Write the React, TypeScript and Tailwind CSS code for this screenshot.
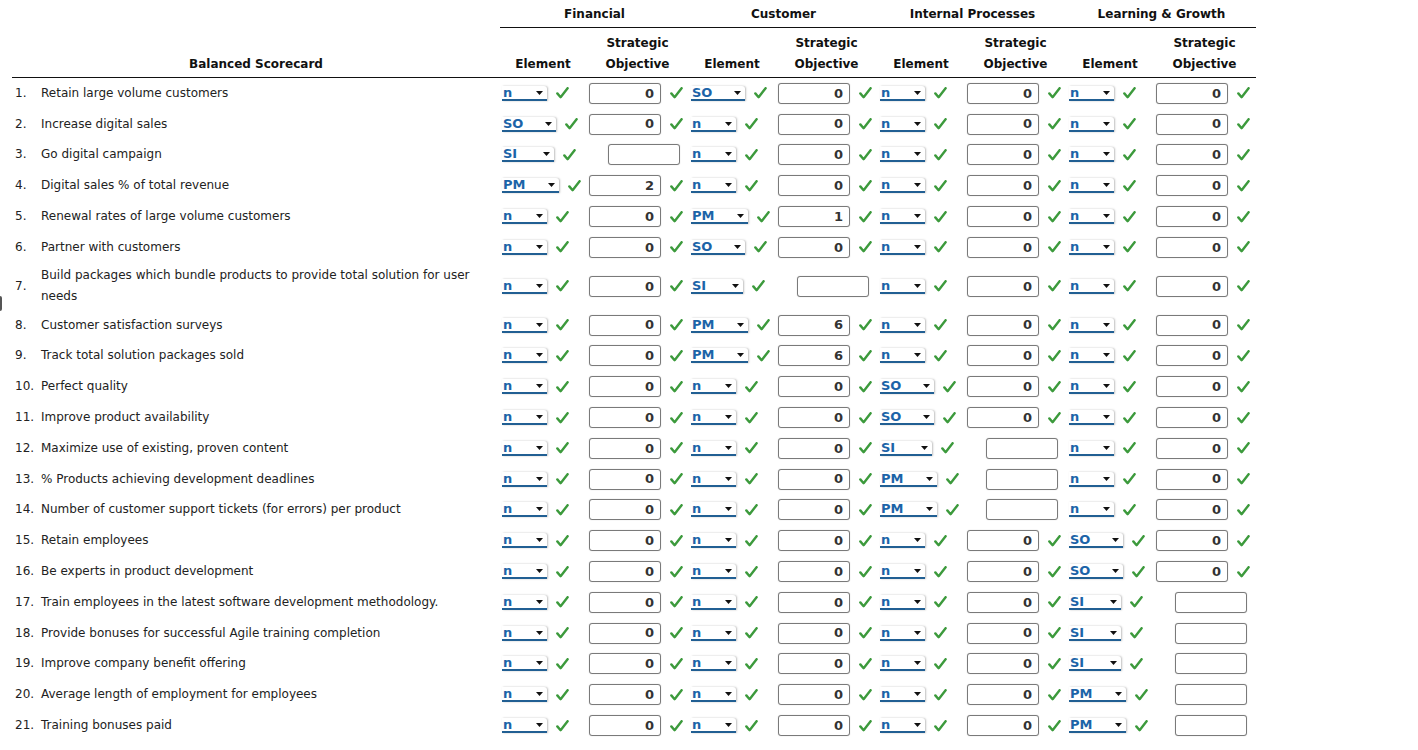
import React from "react";

type Cell = [string, string];
type Row = { label: string; cells: Cell[] };

const rows: Row[] = [
  { label: "Retain large volume customers", cells: [["n", "0"], ["SO", "0"], ["n", "0"], ["n", "0"]] },
  { label: "Increase digital sales", cells: [["SO", "0"], ["n", "0"], ["n", "0"], ["n", "0"]] },
  { label: "Go digital campaign", cells: [["SI", ""], ["n", "0"], ["n", "0"], ["n", "0"]] },
  { label: "Digital sales % of total revenue", cells: [["PM", "2"], ["n", "0"], ["n", "0"], ["n", "0"]] },
  { label: "Renewal rates of large volume customers", cells: [["n", "0"], ["PM", "1"], ["n", "0"], ["n", "0"]] },
  { label: "Partner with customers", cells: [["n", "0"], ["SO", "0"], ["n", "0"], ["n", "0"]] },
  { label: "Build packages which bundle products to provide total solution for user needs", cells: [["n", "0"], ["SI", ""], ["n", "0"], ["n", "0"]] },
  { label: "Customer satisfaction surveys", cells: [["n", "0"], ["PM", "6"], ["n", "0"], ["n", "0"]] },
  { label: "Track total solution packages sold", cells: [["n", "0"], ["PM", "6"], ["n", "0"], ["n", "0"]] },
  { label: "Perfect quality", cells: [["n", "0"], ["n", "0"], ["SO", "0"], ["n", "0"]] },
  { label: "Improve product availability", cells: [["n", "0"], ["n", "0"], ["SO", "0"], ["n", "0"]] },
  { label: "Maximize use of existing, proven content", cells: [["n", "0"], ["n", "0"], ["SI", ""], ["n", "0"]] },
  { label: "% Products achieving development deadlines", cells: [["n", "0"], ["n", "0"], ["PM", ""], ["n", "0"]] },
  { label: "Number of customer support tickets (for errors) per product", cells: [["n", "0"], ["n", "0"], ["PM", ""], ["n", "0"]] },
  { label: "Retain employees", cells: [["n", "0"], ["n", "0"], ["n", "0"], ["SO", "0"]] },
  { label: "Be experts in product development", cells: [["n", "0"], ["n", "0"], ["n", "0"], ["SO", "0"]] },
  { label: "Train employees in the latest software development methodology.", cells: [["n", "0"], ["n", "0"], ["n", "0"], ["SI", ""]] },
  { label: "Provide bonuses for successful Agile training completion", cells: [["n", "0"], ["n", "0"], ["n", "0"], ["SI", ""]] },
  { label: "Improve company benefit offering", cells: [["n", "0"], ["n", "0"], ["n", "0"], ["SI", ""]] },
  { label: "Average length of employment for employees", cells: [["n", "0"], ["n", "0"], ["n", "0"], ["PM", ""]] },
  { label: "Training bonuses paid", cells: [["n", "0"], ["n", "0"], ["n", "0"], ["PM", ""]] },
];

const groups = ["Financial", "Customer", "Internal Processes", "Learning & Growth"];

function Check() {
  return (
    <svg width="13" height="12" viewBox="0 0 13 12" className="shrink-0">
      <path d="M1.3 6.4 L4.6 10.2 L11.6 1.2" fill="none" stroke="#3c9a3c" strokeWidth="2.4" strokeLinecap="round" strokeLinejoin="round" />
    </svg>
  );
}

function Select({ value }: { value: string }) {
  const w =
    value === "n" ? "w-[45px]" : value === "SO" ? "w-[54px]" : value === "SI" ? "w-[52px]" : "w-[57px]";
  return (
    <div
      className={`${w} h-[15px] relative bg-white border-b-2 border-[#215f93] rounded-tr-[3px] shadow-[1px_0px_2px_rgba(0,0,0,0.25)] flex items-center`}
    >
      <span className="pl-[1px] text-[13px] leading-[13px] font-bold text-[#1c64a8]">{value}</span>
      <svg width="7" height="4" viewBox="0 0 7 4" className="absolute right-[4px] top-[5px]">
        <path d="M0 0 L7 0 L3.5 4 Z" fill="#111" />
      </svg>
    </div>
  );
}

function Input({ value }: { value: string }) {
  return (
    <div className="w-[72px] h-[21px] shrink-0 bg-white border border-[#7a7a7a] rounded-[3px] shadow-[0_0_1px_rgba(0,0,0,0.3)] flex items-center justify-end pr-[6px] text-[13px] font-bold text-[#333]">
      {value}
    </div>
  );
}

export default function App() {
  return (
    <div className="relative w-[1418px] h-[750px] bg-white overflow-hidden font-['DejaVu_Sans',Verdana,sans-serif] text-[#222]">
      <div className="absolute left-0 top-[296px] w-[2px] h-[15px] bg-[#555] rounded-r-[2px]" />
      <div className="pl-[12px]">
        {/* header row 1 */}
        <div className="flex">
          <div className="w-[488px]" />
          <div className="flex border-b border-[#111]">
            {groups.map((g) => (
              <div key={g} className="w-[189px] h-[27px] flex items-center justify-center text-[12px] font-bold text-[#111]">
                {g}
              </div>
            ))}
          </div>
        </div>
        {/* header row 2 */}
        <div className="flex w-[1244px] border-b border-[#111]">
          <div className="w-[488px] h-[49px] flex items-end justify-center pb-[2px] text-[12px] font-bold leading-[21px] text-[#111]">
            Balanced Scorecard
          </div>
          {groups.map((g) => (
            <div key={g} className="flex">
              <div className="w-[86px] h-[49px] flex items-end justify-center pb-[2px] text-[12px] font-bold leading-[21px] text-[#111]">
                Element
              </div>
              <div className="w-[103px] h-[49px] flex flex-col items-center justify-end pb-[2px] text-[12px] font-bold leading-[21px] text-[#111]">
                <span>Strategic</span>
                <span>Objective</span>
              </div>
            </div>
          ))}
        </div>
        {/* body */}
        {rows.map((r, i) => (
          <div key={i} className={`flex items-center ${i === 6 ? "h-[47px]" : "h-[30.8px]"}`}>
            <div className="w-[29px] pl-[3px] text-[12px] leading-[21px]">{i + 1}.</div>
            <div className="w-[459px] pr-[12px] text-[12px] leading-[21px]">
              <div className="w-[440px]">{r.label}</div>
            </div>
            {r.cells.map(([el, obj], j) => (
              <div key={j} className="flex items-center w-[189px]">
                <div className="w-[86px] pl-[2px] flex items-center gap-[9px]">
                  <Select value={el} />
                  <Check />
                </div>
                <div className={`w-[103px] flex items-center gap-[9px] ${obj === "" ? "pl-[22px]" : "pl-[3px]"}`}>
                  <Input value={obj} />
                  {obj !== "" && <Check />}
                </div>
              </div>
            ))}
          </div>
        ))}
      </div>
    </div>
  );
}
